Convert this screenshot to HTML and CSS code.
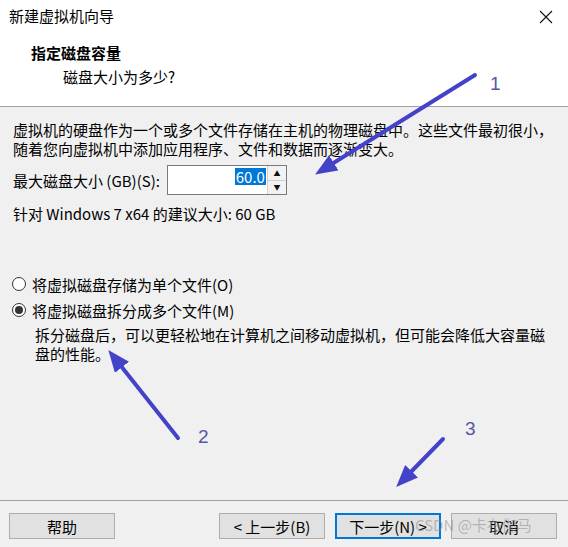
FILE: index.html
```html
<!DOCTYPE html>
<html>

<head>
	<title>新建虚拟机向导</title>
	<link rel="stylesheet" href="styles.css">
</head>

<body>
	<div class="window">
		<div class="titlebar">
			<span class="title">新建虚拟机向导</span>
			<svg class="close" width="14" height="14" viewBox="0 0 14 14">
				<path d="M1 1 L13 13 M13 1 L1 13" stroke="#111" stroke-width="1.1" fill="none" />
			</svg>
		</div>

		<div class="header">
			<div class="header-title">指定磁盘容量</div>
			<div class="header-sub">磁盘大小为多少?</div>
		</div>

		<div class="content">
			<p class="intro">虚拟机的硬盘作为一个或多个文件存储在主机的物理磁盘中。这些文件最初很小，<br>随着您向虚拟机中添加应用程序、文件和数据而逐渐变大。</p>

			<div class="size-row">
				<label>最大磁盘大小 (GB)(S):</label>
				<div class="spinner">
					<div class="spin-input"><span class="selected">60.0</span></div>
					<div class="spin-buttons">
						<div class="spin-btn">&#9650;</div>
						<div class="spin-btn">&#9660;</div>
					</div>
				</div>
			</div>

			<p class="hint">针对 Windows 7 x64 的建议大小: 60 GB</p>

			<div class="options">
				<div class="radio-row"><span class="radio"></span>将虚拟磁盘存储为单个文件(O)</div>
				<div class="radio-row"><span class="radio checked"></span>将虚拟磁盘拆分成多个文件(M)</div>
				<p class="radio-desc">拆分磁盘后，可以更轻松地在计算机之间移动虚拟机，但可能会降低大容量磁<br>盘的性能。</p>
			</div>
		</div>

		<div class="footer">
			<button class="btn">帮助</button>
			<div class="nav-buttons">
				<button class="btn">&lt; 上一步(B)</button>
				<button class="btn focused">下一步(N) &gt;</button>
				<button class="btn">取消</button>
			</div>
		</div>

		<!-- annotation overlay -->
		<svg class="annotations" width="568" height="547" viewBox="0 0 568 547">
			<defs>
				<marker id="head" markerUnits="userSpaceOnUse" markerWidth="22" markerHeight="18" refX="8" refY="9" orient="auto">
					<path d="M0 0 L22 9 L0 18 Z" fill="#4343c9" />
				</marker>
			</defs>
			<g stroke="#4343c9" stroke-width="4" stroke-linecap="round" marker-end="url(#head)">
				<line x1="475" y1="75" x2="327" y2="167" />
				<line x1="178" y1="438" x2="117" y2="361" />
				<line x1="443" y1="439" x2="406" y2="477" />
			</g>
			<g class="labels" fill="#5656a8">
				<text x="490" y="90">1</text>
				<text x="198" y="443">2</text>
				<text x="465" y="435">3</text>
			</g>
		</svg>
		<div class="watermark">CSDN @卡布伽马</div>
	</div>
</body>

</html>
```

FILE: styles.css
```css
body {
	margin: 0;
	font-family: "Noto Sans CJK SC", "Noto Sans", sans-serif;
	font-size: 15px;
	color: #000;
	background-color: #f0f0f0;
}

.window {
	position: relative;
	width: 568px;
	height: 547px;
	display: flex;
	flex-direction: column;
	background-color: #f0f0f0;
	overflow: hidden;
}

.titlebar {
	height: 33px;
	display: flex;
	align-items: center;
	justify-content: space-between;
	padding: 0 15px 0 9px;
	background-color: #fff;
}

.title {
	font-size: 15px;
	line-height: 20px;
	margin-top: -1px;
}

.header {
	height: 74px;
	padding: 10px 0 0 31px;
	box-sizing: border-box;
	background-color: #fff;
	border-bottom: 1px solid #a0a0a0;
}

.header-title {
	font-weight: bold;
	line-height: 20px;
}

.header-sub {
	margin-top: 4px;
	padding-left: 32px;
	line-height: 20px;
}

.content {
	flex: 1;
	padding: 13px 13px 0 13px;
}

.intro {
	margin: 0;
	line-height: 19px;
}

.size-row {
	display: flex;
	align-items: center;
	gap: 7px;
	margin-top: 7px;
	height: 30px;
}

.spinner {
	display: flex;
	height: 30px;
	border: 1px solid #7a7a7a;
	box-sizing: border-box;
	background-color: #fff;
}

.spin-input {
	width: 99px;
	display: flex;
	justify-content: flex-end;
	align-items: flex-start;
	padding: 2px 1px 0 0;
	box-sizing: border-box;
}

.selected {
	background-color: #0078d7;
	color: #fff;
	line-height: 17px;
	padding: 0 1px;
}

.spin-buttons {
	width: 18px;
	display: flex;
	flex-direction: column;
	border-left: 1px solid #d0d0d0;
}

.spin-btn {
	flex: 1;
	display: flex;
	align-items: center;
	justify-content: center;
	font-size: 7px;
	background-color: #f2f2f2;
	color: #111;
}

.spin-btn + .spin-btn {
	border-top: 1px solid #d0d0d0;
}

.hint {
	margin: 9px 0 0 0;
	line-height: 19px;
}

.options {
	margin-top: 48px;
}

.radio-row {
	display: flex;
	align-items: center;
	gap: 6px;
	height: 26px;
	margin-left: -1px;
}

.radio {
	width: 14px;
	height: 14px;
	border: 1px solid #333;
	border-radius: 50%;
	box-sizing: border-box;
	background-color: #fff;
	display: flex;
	align-items: center;
	justify-content: center;
}

.radio.checked::after {
	content: "";
	width: 8px;
	height: 8px;
	border-radius: 50%;
	background-color: #333;
}

.radio-desc {
	margin: 2px 0 0 22px;
	line-height: 19px;
}

.footer {
	height: 47px;
	border-top: 1px solid #a0a0a0;
	display: flex;
	justify-content: space-between;
	align-items: flex-start;
	padding: 12px 11px 0 9px;
	box-sizing: border-box;
}

.nav-buttons {
	display: flex;
	gap: 10px;
}

.btn {
	width: 106px;
	height: 26px;
	font-family: inherit;
	font-size: 15px;
	background-color: #e1e1e1;
	border: 1px solid #adadad;
	color: #000;
	padding: 0;
}

.btn.focused {
	border: 2px solid #0078d7;
}

.annotations {
	position: absolute;
	left: 0;
	top: 0;
	pointer-events: none;
}

.labels text {
	font-family: "Liberation Sans", sans-serif;
	font-size: 19px;
}

.watermark {
	position: absolute;
	left: 415px;
	top: 514px;
	font-size: 15px;
	color: rgba(140, 140, 140, 0.55);
	pointer-events: none;
}
```
